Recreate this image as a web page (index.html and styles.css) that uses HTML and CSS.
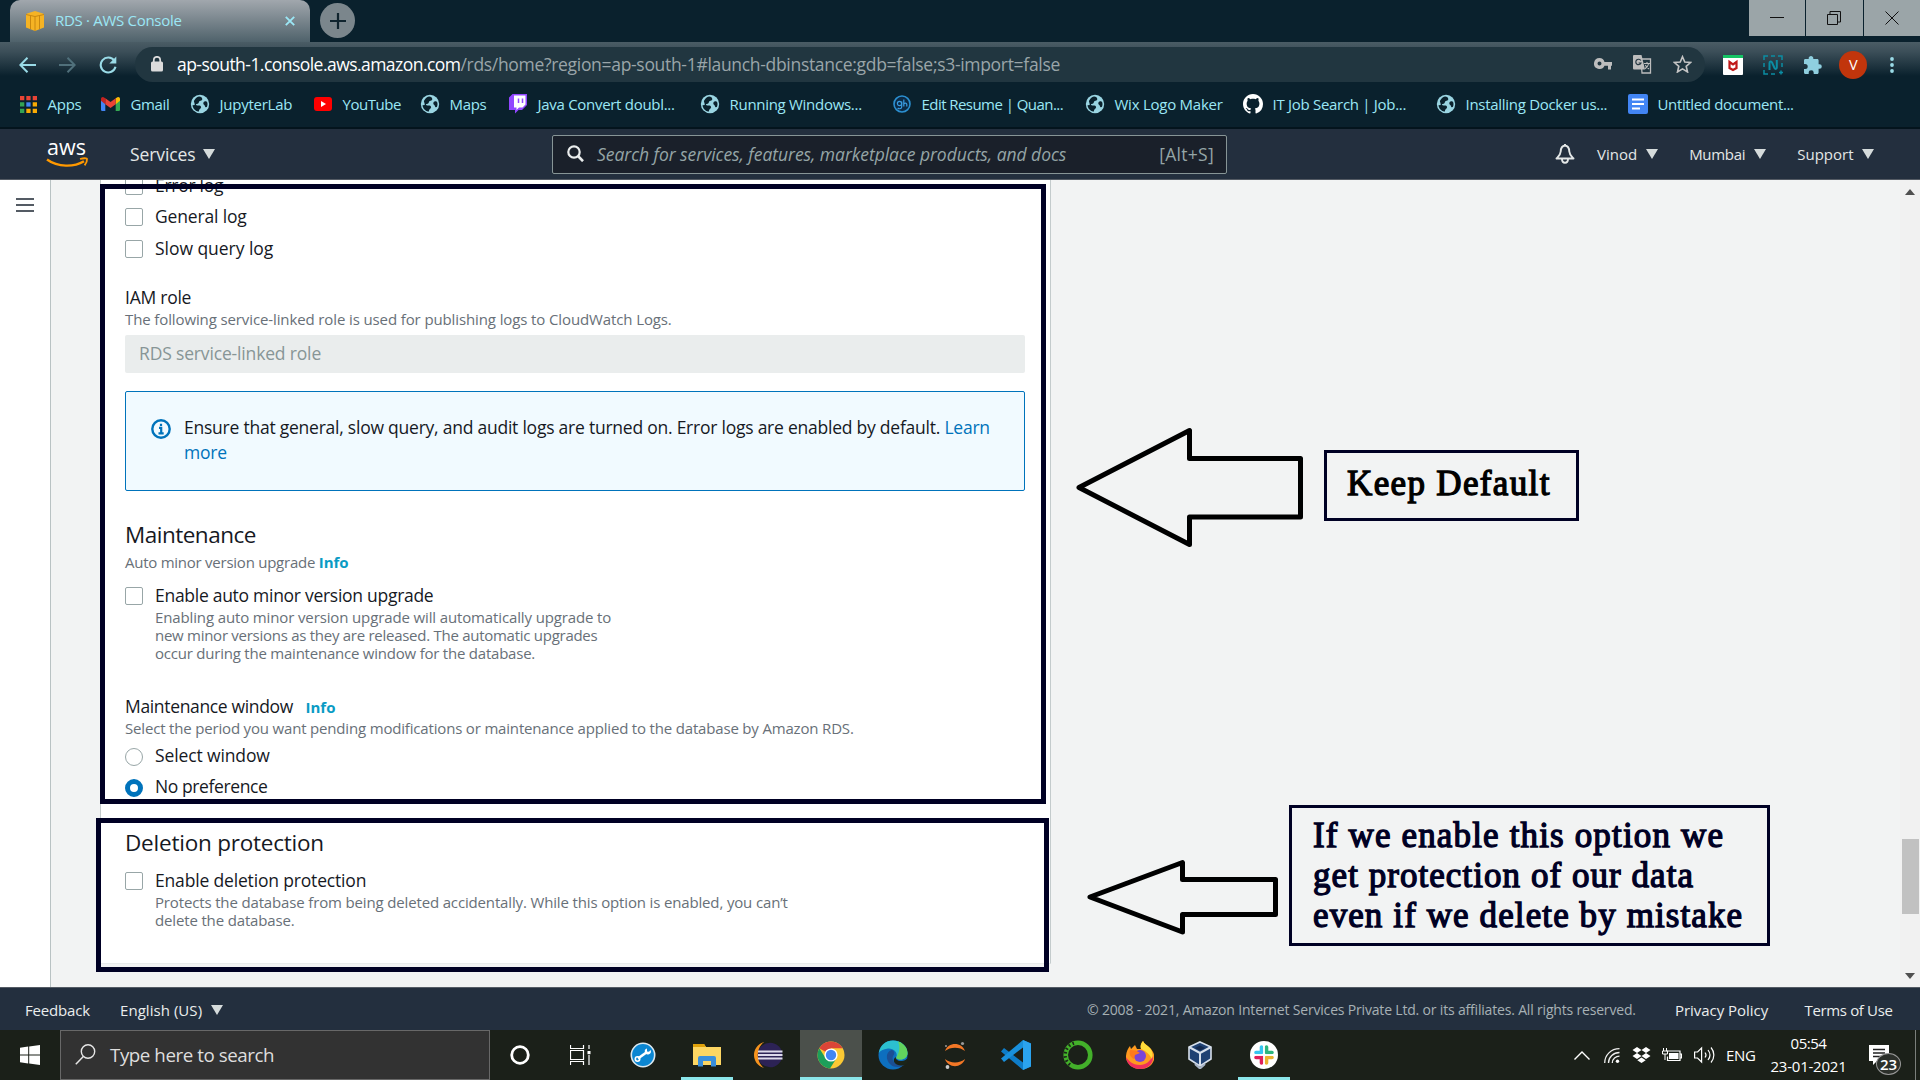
FILE: index.html
```html
<!DOCTYPE html>
<html lang="en">
<head>
<meta charset="utf-8">
<title>RDS · AWS Console</title>
<link rel="stylesheet" href="styles.css">
</head>
<body>
<svg class="defs" width="0" height="0">
  <symbol id="globe" viewBox="0 0 20 20">
    <circle cx="10" cy="10" r="9.2" fill="#9ad5e2"/>
    <path d="M9 2.6c2 .2 3.400 1.200 3.300 2.600-.1 1.200-1.500 1.400-2.600 1.900-1 .5-.6 1.700-1.500 2.400-.8.6-2 .1-2.200 1-.1.8 1.100 1 2.300 1 1.500 0 2.900.4 2.800 1.800-.1 1.300-1.500 1.600-1.900 2.700-.2.700-.3 1.300-.8 1.700-2.900-.5-5.500-3-5.900-6.400l2.200-.3c.1-1.700-.7-2.600-.8-3.900C5 4.900 6.800 3 9 2.600zM14.500 7.600c1.200-.5 2.300-.3 2.800.8.4 1.600.2 3.200-.5 4.700-1 .4-1.700-.1-1.900-1.100-.2-1.300-1.600-1.500-1.600-2.600 0-.8.500-1.500 1.200-1.800z" fill="#0b222d"/>
  </symbol>
  <symbol id="caret" viewBox="0 0 12 10"><path d="M0 0h12L6 10z" fill="#d5dbdb"/></symbol>
</svg>

<header class="tabstrip">
  <div class="tab">
    <svg width="20" height="20" viewBox="0 0 20 20"><path d="M10 0l8 2.500 1 1v13L10 20 1 16.500v-13l1-1z" fill="#f5b324"/><path d="M1 3.500l9 2 9-2M10 5.500V20M5.500 5v13M14.500 5v13" stroke="#c98810" stroke-width="1" fill="none"/></svg>
    <span class="tab-title">RDS · AWS Console</span>
    <svg width="10" height="10" viewBox="0 0 10 10"><path d="M.8.800l8.400 8.400M9.200.8L.8 9.200" stroke="#9be7f5" stroke-width="1.900"/></svg>
  </div>
  <div class="newtab"><svg width="16" height="16" viewBox="0 0 16 16"><path d="M8 0v16M0 8h16" stroke="#10242e" stroke-width="2.200"/></svg></div>
  <div class="winbtns">
    <div><svg width="14" height="14" viewBox="0 0 14 14"><path d="M0 6.500h14" stroke="#111"/></svg></div>
    <div><svg width="14" height="14" viewBox="0 0 14 14"><path d="M.5 3.500h10v10H.5zM3 3V.5h10.500V11H11" fill="none" stroke="#111"/></svg></div>
    <div><svg width="14" height="14" viewBox="0 0 14 14"><path d="M.5.500l13 13M13.500.5l-13 13" stroke="#111"/></svg></div>
  </div>
</header>

<nav class="toolbar">
  <div class="navbtns">
    <svg width="17" height="16" viewBox="0 0 17 16"><path d="M17 8H1.500M8.500.8L1.300 8l7.200 7.200" fill="none" stroke="#9adbe7" stroke-width="2"/></svg>
    <svg width="17" height="16" viewBox="0 0 17 16"><path d="M0 8h15.500M8.500.8L15.700 8l-7.200 7.200" fill="none" stroke="#50707b" stroke-width="2"/></svg>
    <svg width="18" height="18" viewBox="0 0 18 18"><path d="M15.300 4.600A7.500 7.500 0 1 0 16.500 10.800" fill="none" stroke="#9adbe7" stroke-width="2.100"/><path d="M17.300.5v7h-7z" fill="#9adbe7"/></svg>
  </div>
  <div class="omnibox">
    <svg class="lock" width="12" height="16" viewBox="0 0 12 16"><rect y="5.500" width="12" height="10" rx="1.500" fill="#dcdcdc"/><path d="M2.800 6V4a3.200 3.200 0 0 1 6.400 0v2" fill="none" stroke="#dcdcdc" stroke-width="1.700"/></svg>
    <span class="host">ap-south-1.console.aws.amazon.com</span><span class="path">/rds/home?region=ap-south-1#launch-dbinstance:gdb=false;s3-import=false</span>
    <div class="omni-icons">
      <svg width="18" height="12" viewBox="0 0 18 12"><path d="M5.500 0a5.500 5.500 0 1 0 5 7.800H14v3.700h3V7.800h1V4h-7.500A5.500 5.500 0 0 0 5.500 0zm0 3.600a2 2 0 1 1 0 4 2 2 0 0 1 0-4z" fill="#bdbdbd"/></svg>
      <svg width="19" height="19" viewBox="0 0 19 19"><path d="M8 4h9.500v14H9z" fill="none" stroke="#bdbdbd" stroke-width="1.300"/><path d="M1 0h7.500L12 14.500H1a1 1 0 0 1-1-1V1a1 1 0 0 1 1-1z" fill="#bdbdbd"/><path d="M7.800 5.500A2.700 2.700 0 1 0 8 8H5.600" fill="none" stroke="#263842" stroke-width="1.200"/><path d="M11 8.500h6M14 7v1.500M15.700 8.500c-.5 2.500-2 4-3.700 5.200M12.300 10c.9 1.900 2.200 3 3.700 4" fill="none" stroke="#bdbdbd" stroke-width="1.100"/></svg>
      <svg width="19" height="18" viewBox="0 0 20 19"><path d="M10 1.800l2.400 5.600 6.100.5-4.600 4 1.400 6L10 14.700l-5.300 3.200 1.400-6-4.600-4 6.100-.5z" fill="none" stroke="#c4c4c4" stroke-width="1.700"/></svg>
    </div>
  </div>
  <div class="exts">
    <svg width="20" height="20" viewBox="0 0 20 20"><rect width="20" height="20" rx="1" fill="#fff"/><path d="M0 0h20v3H0z" fill="#15c464"/><path d="M6.500 7v6l3.500 2 3.500-2V7L10 9.500z" fill="none" stroke="#c01818" stroke-width="2.200"/></svg>
    <svg width="20" height="20" viewBox="0 0 20 20"><path d="M1 5V1h4M8 1h4M15 1h4v4M19 8v4M1 8v4M1 15v4h4M8 19h4M18 15.500v4M16 17.500h4" fill="none" stroke="#0b8da3" stroke-width="1.500"/><path d="M6.500 15V8c0-2 2-2 2.500-.5l2.500 5.500c.8 1.500 2.300 1 2.300-.5V5" fill="none" stroke="#0b8da3" stroke-width="2"/></svg>
    <svg width="18" height="18" viewBox="0 0 18 18"><path d="M7 0c1.300 0 2.300 1 2.300 2.200V3h3.900c.8 0 1.400.6 1.400 1.400v3.800h.9a2.300 2.300 0 0 1 0 4.600h-.9v3.700c0 .8-.6 1.500-1.400 1.500H9.700v-1.200a2.500 2.500 0 0 0-5 0V18H1.400C.6 18 0 17.300 0 16.500v-3.600h1.200a2.500 2.500 0 0 0 0-5H0V4.400C0 3.600.6 3 1.400 3h3.300v-.8C4.700 1 5.700 0 7 0z" fill="#8fcfdf"/></svg>
    <span class="avatar">V</span>
    <svg width="4" height="16" viewBox="0 0 4 16"><g fill="#9adbe7"><circle cx="2" cy="2" r="1.900"/><circle cx="2" cy="8" r="1.900"/><circle cx="2" cy="14" r="1.900"/></g></svg>
  </div>
</nav>

<div class="bookmarks">
  <span><svg width="17" height="17" viewBox="0 0 17 17"><path d="M0 0h4.300v4.300H0zM6.300 0h4.300v4.300H6.300zM12.700 0H17v4.300h-4.300z" fill="#e94435"/><path d="M0 6.300h4.300v4.300H0zM0 12.700h4.300V17H0z" fill="#34a353"/><path d="M6.300 6.300h4.300v4.300H6.300z" fill="#4285f4"/><path d="M6.300 12.700h4.300V17H6.300zM12.700 6.300H17v4.300h-4.300zM12.700 12.700H17V17h-4.300z" fill="#f9ab04"/></svg><b class="k25">Apps</b></span>
  <span><svg width="19" height="14" viewBox="0 0 19 14"><path d="M0 1.500l4.300 3V14H1.200A1.200 1.200 0 0 1 0 12.800z" fill="#4285f4"/><path d="M19 1.500l-4.300 3V14h3.100a1.200 1.200 0 0 0 1.200-1.200z" fill="#34a853"/><path d="M14.700 1.200L16.500.2C17.700-.4 19 .5 19 1.900v1.900l-4.300 3.400z" fill="#fbbc04"/><path d="M4.300 1.200L9.500 5l5.200-3.800v6L9.500 11 4.300 7.200z" fill="#ea4335"/><path d="M0 1.900C0 .5 1.300-.4 2.500.2l1.800 1v6L0 3.800z" fill="#c5221f"/></svg><b class="k34">Gmail</b></span>
  <span><svg width="20" height="20"><use href="#globe"/></svg><b class="k25">JupyterLab</b></span>
  <span><svg width="18" height="14" viewBox="0 0 18 14"><rect width="18" height="14" rx="3" fill="#f00"/><path d="M7 4l5 3-5 3z" fill="#fff"/></svg><b class="k45">YouTube</b></span>
  <span><svg width="20" height="20"><use href="#globe"/></svg><b class="k34">Maps</b></span>
  <span><svg width="18" height="20" viewBox="0 0 18 20"><path d="M3.500 0H18v11l-5 5H9.500L6 19.500V16H0V3.500z" fill="#9146ff"/><path d="M5 1.500h11.500v9l-3 3H10l-2.500 2.500v-2.500H5z" fill="#fff"/><path d="M9.500 4.500v4.500M13.500 4.500v4.500" stroke="#9146ff" stroke-width="1.500"/></svg><b class="k28">Java Convert doubl...</b></span>
  <span><svg width="20" height="20"><use href="#globe"/></svg><b class="k28">Running Windows...</b></span>
  <span><svg width="18" height="18" viewBox="0 0 18 18"><circle cx="9" cy="9" r="8" fill="#0c2a45" stroke="#2b8fd0" stroke-width="1.600"/><circle cx="6.500" cy="8.500" r="2.100" fill="none" stroke="#3a9be0" stroke-width="1.200"/><path d="M8.700 6.500V12c0 2-3 2.200-4 1M10.800 4.500v7M10.800 9c1-1.500 3-1.200 3 .5v2" fill="none" stroke="#3a9be0" stroke-width="1.200"/></svg><b class="k55">Edit Resume | Quan...</b></span>
  <span><svg width="20" height="20"><use href="#globe"/></svg><b class="k25">Wix Logo Maker</b></span>
  <span><svg width="20" height="20" viewBox="0 0 16 16"><path fill="#fff" d="M8 0C3.580 0 0 3.580 0 8c0 3.540 2.290 6.530 5.470 7.590.4.070.55-.17.55-.38 0-.19-.01-.82-.01-1.490-2.010.37-2.530-.49-2.690-.94-.09-.23-.48-.94-.82-1.130-.28-.15-.68-.52-.01-.53.63-.01 1.080.58 1.230.82.72 1.210 1.870.87 2.330.66.070-.52.28-.87.51-1.070-1.780-.2-3.640-.89-3.640-3.950 0-.87.31-1.590.82-2.150-.08-.2-.36-1.020.080-2.120 0 0 .67-.21 2.200.82.64-.18 1.320-.27 2-.27s1.360.09 2 .27c1.530-1.040 2.200-.82 2.200-.82.44 1.100.16 1.920.080 2.120.51.56.82 1.270.82 2.150 0 3.070-1.870 3.750-3.650 3.950.29.25.54.73.54 1.480 0 1.070-.01 1.930-.01 2.200 0 .21.15.46.55.38A8 8 0 0 0 16 8c0-4.420-3.580-8-8-8z"/></svg><b class="k28">IT Job Search | Job...</b></span>
  <span><svg width="20" height="20"><use href="#globe"/></svg><b class="k28">Installing Docker us...</b></span>
  <span><svg width="20" height="20" viewBox="0 0 20 20"><rect width="20" height="20" rx="2" fill="#4285f4"/><path d="M4 5.500h12M4 10h12M4 14.500h8" stroke="#fff" stroke-width="2.200"/></svg><b class="k34">Untitled document...</b></span>
</div>

<div class="awsbar">
  <svg class="logo" width="42" height="27" viewBox="0 0 42 27"><text x="1" y="14" font-family="Open Sans, sans-serif" font-size="21" font-weight="500" fill="#fff" textLength="39" lengthAdjust="spacingAndGlyphs">aws</text><path d="M1 18.500c11 8 27 7.800 37 1.800" fill="none" stroke="#f90" stroke-width="2.400"/><path d="M34 18c3.500-1 7-1 7 0 .2 1.600-.8 4.300-2.400 6.400" fill="none" stroke="#f90" stroke-width="1.800"/></svg>
  <span class="services">Services</span><svg class="tri" width="12" height="10"><use href="#caret"/></svg>
  <div class="search">
    <svg width="17" height="17" viewBox="0 0 17 17"><circle cx="7" cy="7" r="5.700" fill="none" stroke="#eaeded" stroke-width="2.200"/><path d="M11 11l5 5.200" stroke="#eaeded" stroke-width="2.600"/></svg>
    <em>Search for services, features, marketplace products, and docs</em><span class="short">[Alt+S]</span>
  </div>
  <svg class="bell" width="20" height="20" viewBox="0 0 20 20"><path d="M10 1.500C6.700 2 5.800 4.500 5.700 7.500 5.500 11 4 12 1.500 14.500h17C16 12 14.500 11 14.300 7.500 14.200 4.500 13.300 2 10 1.500z" fill="none" stroke="#e3e7e7" stroke-width="1.900" stroke-linejoin="round"/><path d="M7 15c0 5 6 5 6 0M10 0v2" fill="none" stroke="#e3e7e7" stroke-width="1.900"/></svg>
  <div class="menus">
    <span>Vinod<svg width="12" height="10"><use href="#caret"/></svg></span>
    <span class="mumbai">Mumbai<svg width="12" height="10"><use href="#caret"/></svg></span>
    <span>Support<svg width="12" height="10"><use href="#caret"/></svg></span>
  </div>
</div>

<div class="body">
  <aside><i></i><i></i><i></i></aside>
  <main>
    <section class="panel">
      <div class="opts">
        <div class="opt"><i class="box"></i><span>Error log</span></div>
        <div class="opt"><i class="box"></i><span class="gl">General log</span></div>
        <div class="opt"><i class="box"></i><span class="sq">Slow query log</span></div>
      </div>
      <div class="label iam">IAM role</div>
      <div class="help h-iam">The following service-linked role is used for publishing logs to CloudWatch Logs.</div>
      <div class="input">RDS service-linked role</div>
      <div class="alert">
        <svg width="20" height="20" viewBox="0 0 20 20"><circle cx="10" cy="10" r="8.700" fill="none" stroke="#0073bb" stroke-width="2.400"/><path d="M8 8.800h2.200v5.400M7.500 14.400h5.200M10 4.700v2.300" fill="none" stroke="#0073bb" stroke-width="2.200"/></svg>
        <p>Ensure that general, slow query, and audit logs are turned on. Error logs are enabled by default. <a>Learn<br>more</a></p>
      </div>
      <h2 class="mt">Maintenance</h2>
      <div class="help h-auto">Auto minor version upgrade <a class="info">Info</a></div>
      <div class="opt o-auto"><i class="box"></i><span>Enable auto minor version upgrade</span></div>
      <div class="help ind">Enabling auto minor version upgrade will automatically upgrade to<br><span class="t2">new minor versions as they are released. The automatic upgrades</span><br><span class="t3">occur during the maintenance window for the database.</span></div>
      <div class="label mw">Maintenance window<a class="info">Info</a></div>
      <div class="help h-sel">Select the period you want pending modifications or maintenance applied to the database by Amazon RDS.</div>
      <div class="opts o-win">
        <div class="opt"><i class="box radio"></i><span class="sw">Select window</span></div>
        <div class="opt"><i class="box radio on"></i><span class="np">No preference</span></div>
      </div>
      <h2 class="dp">Deletion protection</h2>
      <div class="opt o-del"><i class="box"></i><span class="ed">Enable deletion protection</span></div>
      <div class="help ind h-del">Protects the database from being deleted accidentally. While this option is enabled, you can’t<br>delete the database.</div>
    </section>
    <section class="panel next"></section>
  </main>
  <div class="scroll">
    <svg width="10" height="6" viewBox="0 0 10 6"><path d="M0 6l5-6 5 6z" fill="#505050"/></svg>
    <div class="thumb"></div>
    <svg class="dn" width="10" height="6" viewBox="0 0 10 6"><path d="M0 0h10L5 6z" fill="#505050"/></svg>
  </div>
</div>

<footer class="awsfoot">
  <span class="fb">Feedback</span><span class="lang">English (US)</span><svg width="12" height="10"><use href="#caret"/></svg>
  <span class="copy">© 2008 - 2021, Amazon Internet Services Private Ltd. or its affiliates. All rights reserved.</span>
  <span class="pp">Privacy Policy</span><span class="tou">Terms of Use</span>
</footer>

<div class="taskbar">
  <div class="start"><svg width="20" height="20" viewBox="0 0 20 20"><path d="M0 2.800L8.200 1.600v8H0zM9.200 1.400L20 0v9.600H9.200zM0 10.500h8.200v8L0 17.300zM9.200 10.500H20V20L9.200 18.600z" fill="#fff"/></svg></div>
  <div class="tsearch"><svg width="21" height="21" viewBox="0 0 21 21"><circle cx="13" cy="7.500" r="6.700" fill="none" stroke="#e6e6e6" stroke-width="1.400"/><path d="M8.300 12.500L.8 20.300" stroke="#e6e6e6" stroke-width="1.500"/></svg><span>Type here to search</span></div>
  <div class="apps">
    <div><svg width="20" height="20" viewBox="0 0 20 20"><circle cx="10" cy="10" r="8.300" fill="none" stroke="#fff" stroke-width="2.800"/></svg></div>
    <div><svg width="21" height="20" viewBox="0 0 21 20"><path d="M.5 0v3.500h13V0M.5 5.500h13v9H.5zM.5 20v-3.500h13V20M19 0v4M19 10v10" fill="none" stroke="#fff" stroke-width="1.200"/><path d="M17.500 6h3v3.200h-3z" fill="#fff"/></svg></div>
    <div><svg width="26" height="26" viewBox="0 0 26 26"><circle cx="13" cy="13" r="11.700" fill="#0b86d2" stroke="#dce8ef" stroke-width="1.600"/><path d="M8 16.500l9-6.500" stroke="#fff" stroke-width="2.600"/><circle cx="7.500" cy="17" r="2.200" fill="none" stroke="#fff" stroke-width="1.600"/><path d="M20.500 8a3 3 0 1 1-3.500-1.500v3l2 .3z" fill="#fff"/></svg></div>
    <div class="run"><svg width="28" height="24" viewBox="0 0 28 24"><path d="M0 1h11l2 3h15v18H0z" fill="#fdd663"/><path d="M0 1h11l2 3H0z" fill="#dfa10b"/><path d="M5 23.500V15a2 2 0 0 1 2-2h14a2 2 0 0 1 2 2v8.500h-5V18h-8v5.500z" fill="#3a8fdc"/></svg></div>
    <div><svg class="ecl" width="30" height="28" viewBox="0 0 30 28"><path d="M11 1C4 3 1 9 1 14s3 11 10 13C6 23 5 18 5 14S6 5 11 1z" fill="#f7941e"/><circle cx="17" cy="14" r="12.300" fill="#2c2255"/><path d="M5 10.500h24.500M5 14h24.500M5 17.500h24.500" stroke="#dcd9ea" stroke-width="1.900"/></svg></div>
    <div class="run active"><svg width="28" height="28" viewBox="0 0 28 28"><circle cx="14" cy="14" r="13.500" fill="#fbc934"/><path d="M14 14L2.300 7.300A13.500 13.500 0 0 1 25.700 7.300H14z" fill="#db4437"/><path d="M2.300 7.200A13.500 13.500 0 0 0 13 27.500l6.500-10.300L8.500 17z" fill="#1c9f5a"/><circle cx="14" cy="14" r="6.600" fill="#fff"/><circle cx="14" cy="14" r="5.200" fill="#4285f4"/></svg></div>
    <div><svg width="30" height="30" viewBox="0 0 30 30"><circle cx="15" cy="15" r="14.500" fill="#0d6fbf"/><path d="M.8 13C2 5 8 .5 15 .5c8 0 14.500 5.500 14.500 12.500 0 4-3 6.500-7 6.500-3.500 0-4.500-1-4-2.500C20 12 15 8 10 8.500 5 9 2 11 .8 13z" fill="#2cc0d0"/><path d="M20 1.500c6 2 9.500 6.500 9.500 11.500 0 4-3 6.500-7 6.500-3.500 0-4.500-1-4-2.500C22 12 22 6 20 1.500z" fill="#62d35d"/><path d="M13.500 10c-6 2-6 10-1 14.500 4 3.500 10 3 14 .5-3 .5-7 .3-9.500-2-3-3-3-6-1-8.500 1-2-.5-4.500-2.500-4.500z" fill="#1b4f94"/><path d="M18 17c-1 2 2 4.500 6 4 2-.3 4-1 5-2.500v5l-4 2c-4 .3-8-1-9-4-.7-2 .5-4 2-4.500z" fill="#1b2419"/></svg></div>
    <div><svg width="24" height="28" viewBox="0 0 24 28"><path d="M2 10C5 .500 19 .5 22 10 17 5.500 7 5.500 2 10zM2 18c3 9.500 17 9.500 20 0-5 4.500-15 4.500-20 0z" fill="#f37726"/><circle cx="19.500" cy="2.500" r="1.600" fill="#999"/><circle cx="4.500" cy="26" r="1.900" fill="#ccc"/><circle cx="3" cy="5" r="1" fill="#999"/></svg></div>
    <div><svg width="30" height="30" viewBox="0 0 30 30"><path d="M22 0l8 3.500v23L22 30 0 11.500 3 8l19 14.500z" fill="#0e7cc8"/><path d="M22 0l8 3.500v23L22 30z" fill="#2ba3ee"/><path d="M22 7.500L3 22 0 18.500 22 0z" fill="#1990dc"/></svg></div>
    <div><svg width="30" height="30" viewBox="0 0 30 30"><circle cx="15" cy="15" r="12.300" fill="none" stroke="#43b02a" stroke-width="4.600"/><path d="M11 3.200A12.300 12.300 0 0 0 9 26" fill="none" stroke="#1b2419" stroke-width="3.200" stroke-dasharray="1.600 2.600"/></svg></div>
    <div><svg width="28" height="28" viewBox="0 0 28 28"><path d="M17 0c1 3 4 4 7 7 4 4 5 8 4 12-2 6-7 9-14 9S1 23 0 17C-.4 12 2 7 4 5l1 3 4-4 2 4h4c-1-3 0-6 2-8z" fill="#ff9a1f"/><path d="M0 16c2 3 6 8 14 8 6 0 10-4 13-9 1 7-5 13-13 13S.500 23 0 16z" fill="#f0305c"/><path d="M17 0c1 3 4 4 7 7 3 4 3 8 2 11-3-6-8-9-11-10-1-3 0-6 2-8z" fill="#ffdb3a"/><circle cx="14" cy="15" r="6" fill="#7a44d8"/><path d="M4 9l6 .5 4 2.500-5 2-1 4c-4-2-5-5-4-9z" fill="#ff7a1c"/></svg></div>
    <div><svg class="vbox" width="26" height="28" viewBox="0 0 26 28"><path d="M13 1l11 5v12l-11 7L2 18V6z" fill="#1f4173" stroke="#d6dfeb" stroke-width="1.600"/><path d="M2 6l11 6 11-6M13 12v13" fill="none" stroke="#d6dfeb" stroke-width="2"/><path d="M8 7l5-2.500L18 7l-5 2.500z" fill="#12294f"/><path d="M8 23l5 4.500 5-4.500" fill="none" stroke="#a9b5c8" stroke-width="2"/></svg></div>
    <div class="run"><svg width="28" height="28" viewBox="0 0 28 28"><circle cx="14" cy="14" r="14" fill="#fff"/><g stroke-width="3.600" stroke-linecap="round"><path d="M11.500 6v5.500M6 11.500h5.500" stroke="#36c5f0"/><path d="M16.500 6v5.500M16.500 11.500H22" stroke="#2eb67d"/><path d="M16.500 16.500H22M16.500 16.500V22" stroke="#ecb22e"/><path d="M6 16.500h5.500V22" fill="none" stroke="#e01e5a"/></g><path d="M14 4v20M4 14h20" stroke="#fff" stroke-width="1.400"/></svg></div>
  </div>
  <div class="tray">
    <svg class="chev" width="16" height="9" viewBox="0 0 16 9"><path d="M.5 8.500L8 1l7.500 7.500" fill="none" stroke="#fff" stroke-width="1.400"/></svg>
    <svg width="16" height="15" viewBox="0 0 16 15"><g fill="none" stroke="#eee" stroke-width="1.300"><path d="M.7 15C.7 7 7 .7 15.500.7M4.500 15c0-6 5-10.500 11-10.500M8.300 15c0-4 3.500-6.800 7.200-6.800"/></g><circle cx="13.500" cy="13.300" r="1.700" fill="#fff"/></svg>
    <svg width="19" height="16" viewBox="0 0 19 16"><path d="M5 0l4.500 3L5 6 .5 3zM14 0l4.500 3L14 6 9.500 3zM5 6l4.500 3L5 12 .5 9zM14 6l4.500 3-4.500 3-4.500-3zM9.500 10.500l4.200 2.700L9.500 16l-4.200-2.800z" fill="#fff"/></svg>
    <svg width="20" height="14" viewBox="0 0 20 14"><path d="M4.500 3H18v9.500H5.500V8.500M18.500 6h1v4h-1" fill="none" stroke="#fff" stroke-width="1.200"/><path d="M7 5h9.500v6H7z" fill="#fff"/><path d="M1.500 0v3M4.500 0v3M.5 3h5v3h-5zM3 6v6" fill="none" stroke="#fff"/></svg>
    <svg width="21" height="18" viewBox="0 0 21 18"><path d="M.6 6h3l4-4v14l-4-4h-3z" fill="none" stroke="#fff" stroke-width="1.200"/><path d="M11 6.500c1.200 1.500 1.200 3.500 0 5M14 4c2.400 3 2.400 7 0 10M17 1.500c3.800 4.500 3.800 10.500 0 15" fill="none" stroke="#fff" stroke-width="1.200"/></svg>
    <span class="eng">ENG</span>
    <div class="clock"><span class="time">05:54</span><span>23-01-2021</span></div>
    <div class="notif"><svg width="20" height="20" viewBox="0 0 20 20"><path d="M0 0h20v16H8l-4 4v-4H0z" fill="#fff"/><path d="M4 4.500h12M4 8h12M4 11.500h8" stroke="#222" stroke-width="1.300"/></svg><span class="count">23</span></div>
  </div>
</div>

<div class="mark m1"></div>
<div class="mark m2"></div>
<svg class="arrow a1" width="232" height="124" viewBox="1073 425 232 124"><path d="M1079 487.500L1189.500 430.500v28h111V517h-111v27.500z"/></svg>
<svg class="arrow a2" width="196" height="78" viewBox="1084 858 196 78"><path d="M1090 897l92.500-34.500v17h93v35h-93V932z"/></svg>
<div class="note n1">Keep Default</div>
<div class="note n2"><span>If we enable this option we</span><br><span class="l2">get protection of our data</span><br><span class="l3">even if we delete by mistake</span></div>
</body>
</html>
```
FILE: styles.css
```css
*{box-sizing:border-box}
body{margin:0;width:1920px;height:1080px;overflow:hidden;position:relative;background:#f2f3f3;font-family:"Open Sans","Noto Sans",sans-serif;font-size:15px;color:#16191f;white-space:nowrap}
svg{display:block;flex:none}
.defs{position:absolute}

/* browser chrome */
.tabstrip{height:42px;background:#0a212d;display:flex;padding-left:10px}
.tab{width:300px;height:42px;border-radius:10px 10px 0 0;background:linear-gradient(#a1a7ad,#4f626b);display:flex;align-items:center;padding:0 15px 0 15px}
.tab-title{flex:1;margin:-2px 0 0 10px;color:#9be7f5;letter-spacing:-.3px}
.newtab{width:35px;height:35px;border-radius:50%;background:#7b868c;margin:3px 0 0 10px;display:grid;place-items:center}
.winbtns{margin-left:auto;display:flex;gap:1px;height:36px}
.winbtns div{width:56.500px;background:#9ba5a8;display:grid;place-items:center}
.toolbar{height:44px;background:linear-gradient(#4a5c65 0,#3b4e58 10px,#0a212d 34px);display:flex;padding:5px 26px 4px 19px}
.navbtns{display:flex;align-items:center;width:116px;gap:23px}
.omnibox{width:1570px;height:35px;border-radius:17.500px;background:#213640;display:flex;align-items:center;padding:0 13px 1px 16px;font-size:17.500px}
.lock{margin-right:14px}
.host{color:#fff;letter-spacing:-.54px}
.path{color:#9aa5a9;letter-spacing:-.31px}
.omni-icons{margin-left:auto;display:flex;align-items:center;gap:21px}
.exts{margin-left:auto;display:flex;align-items:center;justify-content:space-between;width:171px}
.avatar{width:28px;height:28px;border-radius:50%;background:#c1350c;color:#fff;display:grid;place-items:center;font-size:14.500px;margin:0 2.500px 0 -2.500px}
.bookmarks{height:43px;background:#0a212d;border-bottom:2px solid #04141d;padding-left:18.500px;display:grid;grid-template-columns:82px 89px 123px 107px 88px 192px 192px 193px 158px 193px 192px auto;align-items:center;color:#9be7f5}
.bookmarks span{display:grid;grid-template-columns:20px auto;column-gap:10px;justify-content:start;align-items:center;justify-items:center;padding-bottom:5px}
.bookmarks b{font-weight:400;line-height:20px}
.bookmarks span:first-child{column-gap:9px}
.k25{letter-spacing:-.25px}.k28{letter-spacing:-.29px}.k34{letter-spacing:-.35px}.k45{letter-spacing:-.45px}.k55{letter-spacing:-.55px}

/* console header */
.awsbar{height:51px;background:#232f3e;border-bottom:1px solid #545b64;display:flex;align-items:center;padding-left:46px;color:#e3e7e7}
.logo{overflow:visible}
.services{font-size:17.500px;letter-spacing:-.1px;margin-left:42px;width:65px}
.tri{margin-left:8px}
.search{margin-left:337px;width:675px;height:39px;border:1px solid #879596;border-radius:2px;background:#1a202a;display:flex;align-items:center;padding:0 12px 1px 14px;font-size:17.500px;color:#95a5a6}
.search em{margin-left:13px;letter-spacing:-.05px}
.short{margin-left:auto;letter-spacing:.3px}
.bell{margin-left:328px}
.menus{display:flex;margin-left:22px;gap:31.500px}
.menus span{display:flex;align-items:center;gap:8.500px}
.menus .mumbai{letter-spacing:-.3px}

/* console body */
.body{height:807px;display:flex}
aside{width:51px;background:#fff;border-right:1px solid #b9c2c3;padding:18px 16px}
aside i{display:block;height:2px;background:#545b64;margin-bottom:4px}
main{width:1000px;margin-left:49px;overflow:hidden;height:807px}
.panel{height:784px;background:#fff;border:solid #c4cbcc;border-width:0 1px 1px;border-bottom-color:#e8ebeb;width:951px;padding:0 25px 0 24px;display:flow-root}
.next{margin-top:23px;height:30px;border-top:1px solid #d5dbdb}
.opts{display:flex;flex-direction:column;gap:9.250px;margin-top:-6px}
.opt{display:flex;height:22px;align-items:center;font-size:17.500px;letter-spacing:-.28px}
.box{width:18px;height:18px;border:1px solid #98a6a7;border-radius:2px;margin:2px 12px 0 0;background:#fff}
.radio{border-radius:50%}
.radio.on{border:5.500px solid #0073bb}
.gl{letter-spacing:-.16px}.sq{letter-spacing:-.04px}.np{letter-spacing:-.4px}.sw{letter-spacing:-.12px}.ed{letter-spacing:-.17px}
.label{font-size:17.500px;line-height:22px}
.iam{margin-top:27.500px;letter-spacing:-.25px}
.help{line-height:18px;color:#687078;letter-spacing:-.13px}
.h-iam{margin-top:1.500px;letter-spacing:-.115px}
.input{margin-top:7px;height:38px;background:#eaeded;border-radius:2px;padding:0 14px;font-size:17.500px;line-height:37px;color:#879596;letter-spacing:-.16px}
.alert{margin-top:18px;height:100px;border:1px solid #0073bb;border-radius:2px;background:#f1faff;display:flex;padding:23px 25px}
.alert svg{margin:4px 13px 0 0}
.alert p{margin:0;font-size:17.500px;line-height:25px;letter-spacing:-.235px}
.alert a{color:#0073bb}
h2{font-weight:400;font-size:22.500px;line-height:28px;margin:0}
.mt{margin-top:30.500px;letter-spacing:-.5px}
.h-auto{margin-top:4px;letter-spacing:-.25px}
.info{color:#0a9bc4;font-weight:700;font-size:15px;letter-spacing:0}
.o-auto{margin-top:12.500px}
.o-auto .box,.o-win .box{margin-top:3px}
.ind{margin:2.500px 0 0 30px}
.t2{letter-spacing:-.27px}
.t3{letter-spacing:-.22px}
.mw{margin-top:33px;letter-spacing:-.34px}
.mw .info{margin-left:12.500px}
.h-sel{margin-top:1px;letter-spacing:-.175px}
.o-win{margin-top:7px}
.dp{margin-top:31.500px;letter-spacing:-.22px}
.o-del{margin-top:12.500px}
.h-del{letter-spacing:-.15px;margin-top:2px}
.scroll{margin-left:auto;width:20px;background:#f1f1f1;padding:9px 2px 8px;display:flex;flex-direction:column;align-items:center}
.thumb{width:17px;height:75px;background:#c1c1c1;margin-top:644px}
.dn{margin-top:auto}

/* console footer */
.awsfoot{height:43px;background:#232f3e;border-top:1px solid #545b64;display:flex;align-items:center;padding:1px 0 0 25px;color:#eaeded}
.fb{width:95px;letter-spacing:-.17px}
.lang{width:91px;letter-spacing:.05px}
.copy{margin-left:864px;width:588px;color:#a7b1b5;font-size:14px;letter-spacing:-.18px}
.pp{width:129.500px;letter-spacing:-.04px}
.tou{letter-spacing:-.35px}

/* taskbar */
.taskbar{height:50px;background:#1b2019;display:flex;color:#fff}
.start{width:60px;display:grid;place-items:center}
.tsearch{width:430px;background:#323232;border:1px solid #686868;display:flex;align-items:center;padding:0 0 1px 14px;font-size:18.750px;letter-spacing:-.45px;color:#dedede}
.tsearch span{margin-left:14px}
.apps{display:grid;grid-template-columns:60px 60px 66px repeat(10,61.900px)}
.apps div{display:grid;place-items:center;position:relative}
.vbox{margin-right:4px}
.ecl{margin-right:2px}
.run::after{content:"";position:absolute;bottom:0;left:5px;right:5px;height:3px;background:#8be6ea}
.active{background:#4b504b}
.active::after{left:0;right:0}
.tray{margin-left:auto;display:flex;align-items:center;gap:11.500px;padding-right:4px}
.chev{margin-right:3px}
.eng{letter-spacing:-.34px;width:30px}
.clock{width:76px;text-align:center;letter-spacing:-.23px;line-height:23px;display:flex;flex-direction:column;margin-left:3px}
.time{letter-spacing:-.45px}
.notif{width:47px;height:50px;border-right:1px solid #7b7f7b;margin-left:11px;padding-top:15px;position:relative}
.count{position:absolute;left:7px;top:23px;width:25px;height:22px;border:1px solid #999;border-radius:50%;background:#2c302b;font-weight:600;line-height:20px;text-align:center;font-size:15px}

/* annotations drawn over the page */
.mark{position:absolute;border:5px solid #000024}
.m1{left:100px;top:184px;width:946px;height:620px}
.m2{left:96px;top:818px;width:953px;height:154px}
.arrow{position:absolute;fill:none;stroke:#000;stroke-width:5;stroke-linejoin:round}
.a1{left:1073px;top:425px}
.a2{left:1084px;top:858px}
.note{position:absolute;border:3px solid #000024;font:35px/40px "Liberation Serif",serif;color:#000024;-webkit-text-stroke:1.300px #000024}
.n1{left:1324px;top:450px;width:255px;height:71px;padding:10.500px 20px;letter-spacing:1.350px;color:#000;-webkit-text-stroke-color:#000}
.n2{left:1289px;top:805px;width:481px;height:141px;padding:8px 21px;letter-spacing:1.150px}
.l2{letter-spacing:1.050px}
.l3{letter-spacing:1.100px}
```
